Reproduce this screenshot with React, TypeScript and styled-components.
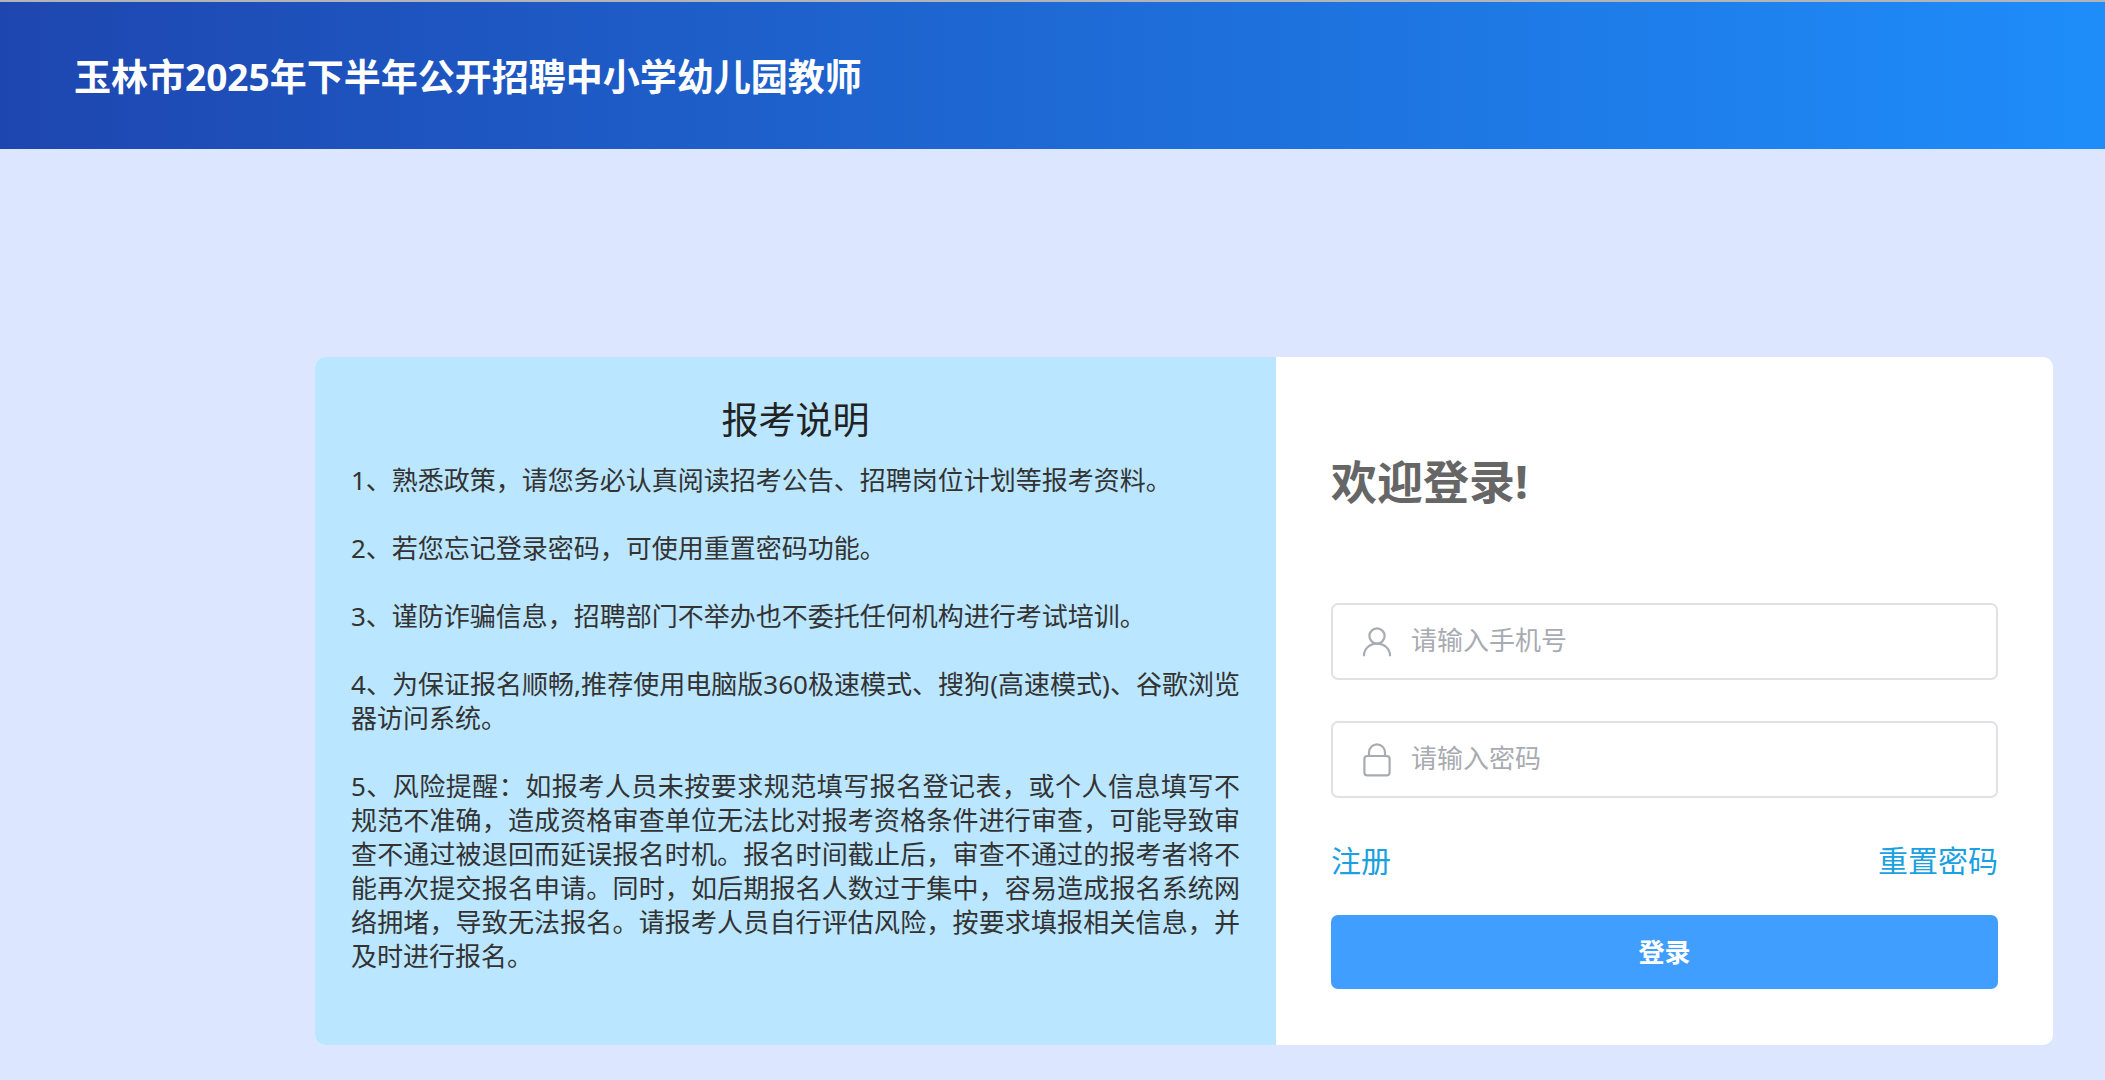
import React, { useState } from "react";
import styled, { createGlobalStyle } from "styled-components";

const GlobalStyle = createGlobalStyle`
  *, *::before, *::after { box-sizing: border-box; }
  body {
    margin: 0;
    background: #dde6ff;
    font-family: "Noto Sans", "Noto Sans CJK SC", sans-serif;
    color: #333;
  }
`;

const Page = styled.div`
  min-height: 100vh;
  display: flex;
  flex-direction: column;
`;

const Header = styled.header`
  display: flex;
  align-items: center;
  min-height: 149px;
  padding: 2px 74px 0;
  border-top: 2px solid #b1b4b8;
  background: linear-gradient(90deg, #1e46b0, #1e8dfa);
`;

const SiteTitle = styled.h1`
  margin: 0;
  font-size: 37px;
  line-height: 50px;
  font-weight: 700;
  color: #fff;
`;

const Main = styled.main`
  display: grid;
  grid-template-columns: 315fr 1738fr 52fr;
  padding: 208px 0 34px;
`;

const Card = styled.div`
  grid-column: 2;
  display: grid;
  grid-template-columns: 961fr 777fr;
  border-radius: 10px;
  overflow: hidden;
  background: #fff;
`;

const Notice = styled.section`
  padding: 36px 36px 68px;
  background: #bbe6ff;
`;

const NoticeTitle = styled.h2`
  margin: 0 0 16px;
  font-size: 37px;
  line-height: 54px;
  font-weight: 400;
  text-align: center;
  color: #222;
`;

const NoticeList = styled.div`
  display: flex;
  flex-direction: column;
  gap: 34px;
`;

const NoticeItem = styled.p`
  margin: 0;
  font-size: 26px;
  line-height: 34px;
  text-align: justify;
`;

const LoginForm = styled.form`
  display: flex;
  flex-direction: column;
  padding: 91px 55px 56px;
`;

const Welcome = styled.h2`
  margin: 0 0 89px;
  font-size: 46px;
  line-height: 66px;
  font-weight: 700;
  color: #666;
`;

const Fields = styled.div`
  display: flex;
  flex-direction: column;
  gap: 41px;
`;

const Field = styled.label`
  display: flex;
  align-items: center;
  gap: 16px;
  height: 77px;
  padding: 0 26px;
  border: 2px solid #dfe1e5;
  border-radius: 7px;
  color: #a8abb2;

  &:focus-within { border-color: #409eff; }
`;

const Input = styled.input`
  flex: 1;
  min-width: 0;
  padding: 0 0 3px;
  border: 0;
  outline: 0;
  background: transparent;
  font: inherit;
  font-size: 26px;
  line-height: 38px;
  color: #606266;

  &::placeholder { color: #a8abb2; opacity: 1; }
`;

const Links = styled.nav`
  display: flex;
  justify-content: space-between;
  margin: 41px 0 32px;
`;

const TextLink = styled.a`
  font-size: 30px;
  line-height: 44px;
  color: #1ba0e1;
  text-decoration: none;
`;

const SubmitButton = styled.button`
  height: 74px;
  padding: 0 0 3px;
  border: 0;
  border-radius: 7px;
  background: #409eff;
  font: inherit;
  font-size: 26px;
  font-weight: 700;
  color: #fff;
  cursor: pointer;
`;

const Icon = styled.svg`
  flex: none;
  width: 36px;
  height: 36px;
  fill: none;
  stroke: currentColor;
  stroke-width: 2.2;
  stroke-linecap: butt;
  stroke-linejoin: round;
`;

const UserIcon = () => (
  <Icon viewBox="0 0 36 36" aria-hidden="true">
    <circle cx="18" cy="12" r="7.6" />
    <path d="M5 32.2v-1a13 11.6 0 0 1 26 0v1" />
  </Icon>
);

const LockIcon = () => (
  <Icon viewBox="0 0 36 36" aria-hidden="true">
    <rect x="5.4" y="14" width="25.2" height="19.4" rx="3" />
    <path d="M10 14v-3.6a8 8 0 0 1 16 0V14" />
  </Icon>
);

const notices = [
  "1、熟悉政策，请您务必认真阅读招考公告、招聘岗位计划等报考资料。",
  "2、若您忘记登录密码，可使用重置密码功能。",
  "3、谨防诈骗信息，招聘部门不举办也不委托任何机构进行考试培训。",
  "4、为保证报名顺畅,推荐使用电脑版360极速模式、搜狗(高速模式)、谷歌浏览器访问系统。",
  "5、风险提醒：如报考人员未按要求规范填写报名登记表，或个人信息填写不规范不准确，造成资格审查单位无法比对报考资格条件进行审查，可能导致审查不通过被退回而延误报名时机。报名时间截止后，审查不通过的报考者将不能再次提交报名申请。同时，如后期报名人数过于集中，容易造成报名系统网络拥堵，导致无法报名。请报考人员自行评估风险，按要求填报相关信息，并及时进行报名。",
];

export default function App() {
  const [phone, setPhone] = useState("");
  const [password, setPassword] = useState("");

  return (
    <Page lang="zh-CN">
      <GlobalStyle />
      <Header>
        <SiteTitle>玉林市2025年下半年公开招聘中小学幼儿园教师</SiteTitle>
      </Header>
      <Main>
        <Card>
          <Notice>
            <NoticeTitle>报考说明</NoticeTitle>
            <NoticeList>
              {notices.map((text) => (
                <NoticeItem key={text}>{text}</NoticeItem>
              ))}
            </NoticeList>
          </Notice>
          <LoginForm onSubmit={(event) => event.preventDefault()}>
            <Welcome>欢迎登录!</Welcome>
            <Fields>
              <Field htmlFor="phone">
                <UserIcon />
                <Input
                  id="phone"
                  type="tel"
                  aria-label="请输入手机号"
                  placeholder="请输入手机号"
                  value={phone}
                  onChange={(event) => setPhone(event.target.value)}
                />
              </Field>
              <Field htmlFor="password">
                <LockIcon />
                <Input
                  id="password"
                  type="password"
                  aria-label="请输入密码"
                  placeholder="请输入密码"
                  value={password}
                  onChange={(event) => setPassword(event.target.value)}
                />
              </Field>
            </Fields>
            <Links>
              <TextLink href="#register">注册</TextLink>
              <TextLink href="#reset">重置密码</TextLink>
            </Links>
            <SubmitButton type="submit">登录</SubmitButton>
          </LoginForm>
        </Card>
      </Main>
    </Page>
  );
}
